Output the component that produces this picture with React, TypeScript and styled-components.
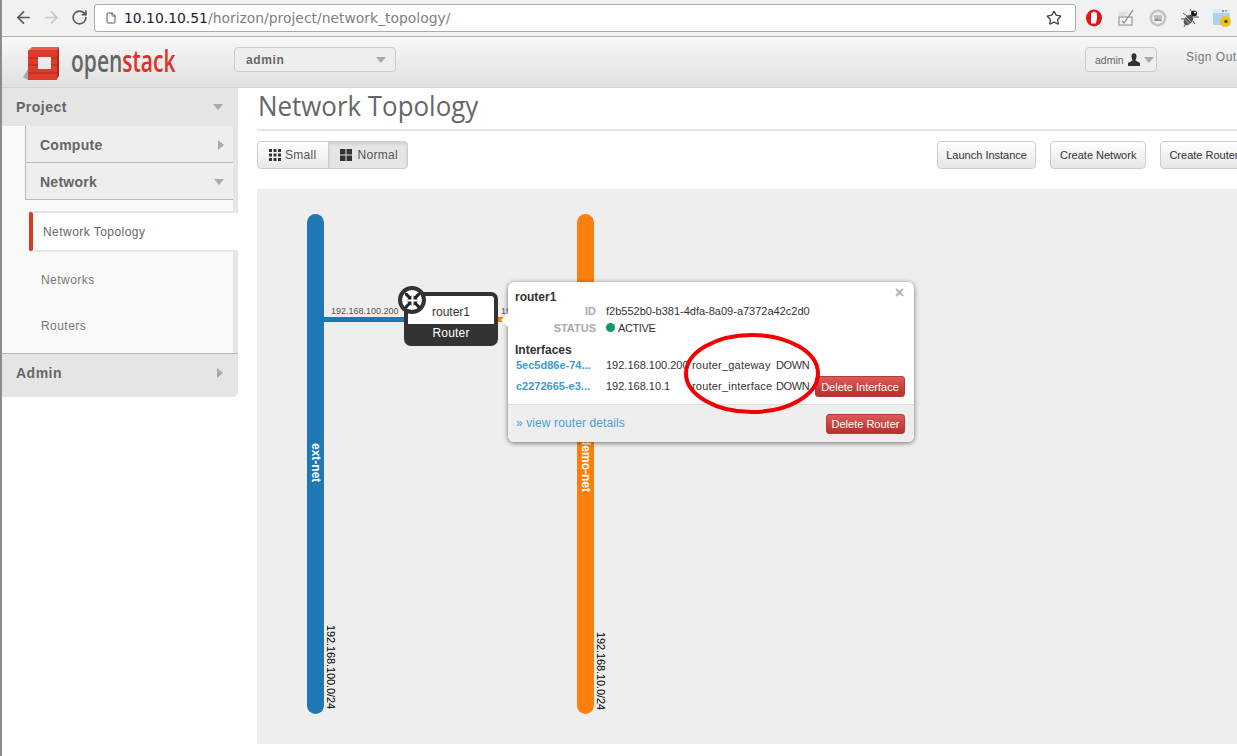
import { ArrowLeft, ArrowRight, File, RotateCw, Star } from "lucide-react";
import styled, { createGlobalStyle } from "styled-components";

const interfaces = [
  { id: "5ec5d86e-74...", ip: "192.168.100.200", type: "router_gateway", status: "DOWN", deletable: false },
  { id: "c2272665-e3...", ip: "192.168.10.1", type: "router_interface", status: "DOWN", deletable: true },
];

const App = () => {
  return (
    <Page>
      <GlobalStyle />
      <BrowserBar>
        <NavIcon><ArrowLeft size={19} strokeWidth={2.2} color="#5a5a5a" /></NavIcon>
        <NavIcon><ArrowRight size={19} strokeWidth={2.2} color="#c8c8c8" /></NavIcon>
        <NavIcon><RotateCw size={17} strokeWidth={2.4} color="#5a5a5a" /></NavIcon>
        <AddressBar>
          <File size={12} color="#555" />
          <Url>
            10.10.10.51<UrlPath>/horizon/project/network_topology/</UrlPath>
          </Url>
          <Star size={16} strokeWidth={2} color="#444" />
        </AddressBar>
        <Extensions>
          <svg width="20" height="20" viewBox="0 0 20 20">
            <ellipse cx="10" cy="10" rx="8" ry="8.500" fill="#e0141c" />
            <path d="M7 15.500V9l.4-4.500 1 .5.800-1.500 1 .5 1-.5.600 1.500 1-.5.200 5-1 6z" fill="#fff" />
          </svg>
          <svg width="20" height="20" viewBox="0 0 20 20">
            <rect x="2" y="2" width="14" height="17" fill="#ececec" />
            <rect x="3" y="9" width="13" height="8" fill="#f6f6f6" stroke="#8a8a8a" />
            <path d="M6 13l2 2 9-13" fill="none" stroke="#8c8c8c" strokeWidth="1.300" />
            <path d="M3 5h8M3 7h6" stroke="#d0d0d0" />
          </svg>
          <svg width="20" height="20" viewBox="0 0 20 20">
            <circle cx="10" cy="10" r="7.200" fill="#f0f0f0" stroke="#c4c4c4" strokeWidth="2.600" />
            <rect x="6" y="7" width="8" height="6" fill="#c0c0c0" />
            <path d="M6 13l3-3 2 2 1-1 2 2z" fill="#8f8f8f" />
          </svg>
          <svg width="20" height="20" viewBox="0 0 20 20">
            <ellipse cx="8.500" cy="12" rx="4" ry="5.800" fill="#555" transform="rotate(40 8.500 12)" />
            <path d="M6 9l5 5M4.500 11l5 5" stroke="#ccc" strokeWidth=".8" />
            <circle cx="14" cy="5.500" r="3" fill="#1c1c1c" />
            <circle cx="15" cy="4.500" r="1" fill="#fff" />
            <path d="M3 5l4 3M1 11l4 0M4 19l2-4M10 1l2 3M19 9l-5 0M15 16l-2-3" stroke="#555" strokeWidth="1" />
          </svg>
          <svg width="20" height="20" viewBox="0 0 20 20">
            <rect x="1" y="1" width="17" height="16" rx="1" fill="#a9d3ee" />
            <rect x="1" y="1" width="17" height="4" fill="#dcedf8" />
            <circle cx="11" cy="3" r="1" fill="#e45" />
            <circle cx="14" cy="3" r="1" fill="#5b5" />
            <circle cx="13.500" cy="13.500" r="5.500" fill="#f2c21a" />
            <circle cx="14" cy="13.500" r="1.800" fill="#5a4300" />
          </svg>
        </Extensions>
      </BrowserBar>

      <Header>
        <Logo>
          <svg width="38" height="36" viewBox="0 0 38 36">
            <path d="M1 31l5-8v11z" fill="#a9a9a9" />
            <path d="M7 4l3-3h27l-2 3z" fill="#ea5b4c" />
            <path d="M35 4l2-3v29l-2 3z" fill="#b5281c" />
            <path fillRule="evenodd" d="M6 4h29v30H6zM16 11v12h13V11z" fill="#df3b2b" />
            <path d="M6 12h10M6 19h10M6 27h29M29 12h6M29 19h6" stroke="#a82a1f" strokeWidth="1" />
          </svg>
          <LogoText>
            open<LogoAccent>stack</LogoAccent>
          </LogoText>
        </Logo>
        <ProjectSelect>
          admin
          <Caret $dir="down" />
        </ProjectSelect>
        <HeaderRight>
          <UserSelect>
            admin
            <svg width="14" height="13" viewBox="0 0 14 13">
              <path d="M4.500 3.500a2.500 3.200 0 0 1 5 0c0 2-1 3-1 4l4.500 2.500V13H1v-3l4.500-2.500c0-1-1-2-1-4z" fill="#333" />
            </svg>
            <Caret $dir="down" />
          </UserSelect>
          <SignOut>Sign Out</SignOut>
        </HeaderRight>
      </Header>

      <Body>
        <Sidebar>
          <SectionHead>
            Project
            <Caret $dir="down" />
          </SectionHead>
          <Panel>
            <SubHead>
              Compute
              <Caret $dir="right" />
            </SubHead>
            <SubHead>
              Network
              <Caret $dir="down" />
            </SubHead>
            <ActiveLink>Network Topology</ActiveLink>
            <NavLink>Networks</NavLink>
            <NavLink>Routers</NavLink>
          </Panel>
          <SectionHead $closing>
            Admin
            <Caret $dir="right" />
          </SectionHead>
        </Sidebar>

        <Main>
          <Title>
            <TitleText>Network Topology</TitleText>
          </Title>
          <Toolbar>
            <ButtonGroup>
              <GroupButton>
                <svg width="12" height="12" viewBox="0 0 12 12" fill="#333">
                  {[0, 4.500, 9].map((x) =>
                    [0, 4.500, 9].map((y) => <rect key={`${x}-${y}`} x={x} y={y} width="3" height="3" />),
                  )}
                </svg>
                Small
              </GroupButton>
              <GroupButton $active>
                <svg width="12" height="12" viewBox="0 0 12 12" fill="#333">
                  <rect width="5.500" height="5.500" />
                  <rect x="6.500" width="5.500" height="5.500" />
                  <rect y="6.500" width="5.500" height="5.500" />
                  <rect x="6.500" y="6.500" width="5.500" height="5.500" />
                </svg>
                Normal
              </GroupButton>
            </ButtonGroup>
            <Actions>
              <ActionButton>Launch Instance</ActionButton>
              <ActionButton>Create Network</ActionButton>
              <ActionButton>Create Router</ActionButton>
            </Actions>
          </Toolbar>

          <Canvas>
            <NetworkBar $left={50} $color="#1f77b4">
              <NetworkName $top={229}>ext-net</NetworkName>
            </NetworkBar>
            <NetworkCidr $left={67} $top={436}>192.168.100.0/24</NetworkCidr>
            <NetworkBar $left={320} $color="#ff7f0e">
              <NetworkName $top={224}>demo-net</NetworkName>
            </NetworkBar>
            <NetworkCidr $left={337} $top={443}>192.168.10.0/24</NetworkCidr>

            <PortLink $left={67} $width={81} $color="#1f77b4" />
            <PortLabel $left={74}>192.168.100.200</PortLabel>
            <PortLink $left={240} $width={12} $color="#ff7f0e" />
            <PortLabel $left={244}>192.168.10.1</PortLabel>

            <RouterNode>
              <RouterName>router1</RouterName>
              <RouterKind>Router</RouterKind>
              <RouterBadge>
                <svg width="17" height="17" viewBox="0 0 16 16" fill="#222">
                  <path d="M1 1l2 0 3 3 1-1v4H3l1-1-3-3zM15 1v2l-3 3 1 1H9V3l1 1 3-3zM1 15v-2l3-3-1-1h4v4l-1-1-3 3zM15 15h-2l-3-3-1 1V9h4l-1 1 3 3z" />
                </svg>
              </RouterBadge>
            </RouterNode>

            <Balloon>
              <Close>×</Close>
              <BalloonBody>
                <BalloonTitle>router1</BalloonTitle>
                <InfoRow>
                  <InfoLabel>ID</InfoLabel>
                  <span>f2b552b0-b381-4dfa-8a09-a7372a42c2d0</span>
                </InfoRow>
                <InfoRow>
                  <InfoLabel>STATUS</InfoLabel>
                  <StatusValue>
                    <StatusDot />
                    ACTIVE
                  </StatusValue>
                </InfoRow>
                <SectionTitle>Interfaces</SectionTitle>
                {interfaces.map((item) => (
                  <InterfaceRow key={item.id}>
                    <InterfaceLink>{item.id}</InterfaceLink>
                    <span>{item.ip}</span>
                    <InterfaceType>{item.type}</InterfaceType>
                    <InterfaceStatus>{item.status}</InterfaceStatus>
                    {item.deletable && <DangerButton $width={90} $height={21}>Delete Interface</DangerButton>}
                  </InterfaceRow>
                ))}
              </BalloonBody>
              <BalloonFooter>
                <DetailsLink>» view router details</DetailsLink>
                <DangerButton $width={79} $height={20}>Delete Router</DangerButton>
              </BalloonFooter>
            </Balloon>

            <Highlight width="140" height="85" viewBox="0 0 140 85">
              <ellipse cx="69" cy="42.500" rx="66" ry="38.500" fill="none" stroke="#f00000" strokeWidth="4" />
            </Highlight>
          </Canvas>
        </Main>
      </Body>
    </Page>
  );
};

const GlobalStyle = createGlobalStyle`
  html, body {
    margin: 0;
    padding: 0;
    background: #fff;
  }
  body {
    font-family: "Liberation Sans", Arial, sans-serif;
    overflow: hidden;
  }
  * {
    box-sizing: border-box;
  }
`;

const Page = styled.div`
  width: 1237px;
  height: 756px;
  overflow: hidden;
  border-left: 2px solid #8c8c8c;
  background: #fff;
`;

const BrowserBar = styled.div`
  height: 37px;
  display: flex;
  align-items: center;
  padding: 0 0 1px 7px;
  background: #f1f1f1;
  border-bottom: 1px solid #adadad;
`;

const NavIcon = styled.span`
  width: 28px;
  display: flex;
  justify-content: center;
`;

const AddressBar = styled.div`
  width: 982px;
  height: 28px;
  margin-left: 1px;
  display: flex;
  align-items: center;
  gap: 7px;
  padding: 0 13px 0 10px;
  background: #fff;
  border: 1px solid #aaa;
  border-radius: 3px;
`;

const Url = styled.span`
  flex: 1;
  font-family: "DejaVu Sans", sans-serif;
  font-size: 13.900px;
  color: #222;
`;

const UrlPath = styled.span`
  color: #808080;
`;

const Extensions = styled.div`
  display: flex;
  gap: 12px;
  margin-left: 8px;
`;

const Header = styled.div`
  height: 51px;
  display: flex;
  align-items: center;
  padding: 0 0 5px 20px;
  background: linear-gradient(#f8f8f8, #e0e0e0);
  border-bottom: 1px solid #d2d2d2;
`;

const Logo = styled.div`
  width: 212px;
  margin-top: 9px;
  display: flex;
  align-items: center;
  gap: 11px;
`;

const LogoText = styled.span`
  display: inline-block;
  margin-top: -6px;
  transform: scaleX(0.7);
  transform-origin: left center;
  font-family: "Open Sans", sans-serif;
  font-size: 30px;
  font-weight: 600;
  line-height: 36px;
  color: #666;
  white-space: nowrap;
`;

const LogoAccent = styled.span`
  color: #dc3228;
`;

const Select = styled.div`
  height: 25px;
  display: flex;
  align-items: center;
  background: #eee;
  border: 1px solid #ccc;
  border-radius: 4px;
  color: #666;
`;

const ProjectSelect = styled(Select)`
  width: 162px;
  justify-content: space-between;
  padding: 0 9px 0 11px;
  font-size: 12px;
  font-weight: bold;
  letter-spacing: 0.6px;
`;

const HeaderRight = styled.div`
  margin-left: auto;
  display: flex;
  align-items: center;
  gap: 29px;
  margin-right: -30px;
`;

const UserSelect = styled(Select)`
  width: 72px;
  gap: 3px;
  padding-left: 9px;
  font-size: 10.500px;
`;

const SignOut = styled.span`
  width: 81px;
  margin-top: -5px;
  color: #777;
  font-size: 12px;
  letter-spacing: 0.5px;
`;

const Caret = styled.i<{ $dir: "down" | "right" }>`
  flex: none;
  width: 0;
  height: 0;
  border-style: solid;
  border-color: transparent;
  ${({ $dir }) =>
    $dir === "down"
      ? "border-width: 6px 5px 0 5px; border-top-color: #aaa;"
      : "border-width: 5.500px 0 5.500px 6px; border-left-color: #aaa;"}
`;

const Body = styled.div`
  display: flex;
  align-items: flex-start;
`;

const Sidebar = styled.nav`
  width: 236px;
  flex: none;
  color: #666;
`;

const SectionHead = styled.div<{ $closing?: boolean }>`
  height: ${({ $closing }) => ($closing ? "44px" : "38px")};
  display: flex;
  align-items: center;
  justify-content: space-between;
  padding: 0 15px 0 14px;
  background: #e5e5e5;
  font-size: 14px;
  font-weight: bold;
  letter-spacing: 0.5px;
  ${({ $closing }) =>
    $closing && "padding-bottom: 5px; border-top: 1px solid #b9b9b9; border-bottom-right-radius: 5px;"}
`;

const Panel = styled.div`
  height: 227px;
  background: #f9f9f9;
  border-right: 5px solid #e5e5e5;
  padding-left: 23px;
`;

const SubHead = styled.div`
  height: 37px;
  display: flex;
  align-items: center;
  justify-content: space-between;
  padding: 2px 9px 0 14px;
  background: #eee;
  border-left: 1px solid #b9b9b9;
  border-bottom: 1px solid #b9b9b9;
  font-size: 14px;
  font-weight: bold;
  letter-spacing: 0.25px;
`;

const ActiveLink = styled.div`
  height: 41px;
  margin: 11px -5px 0 4px;
  display: flex;
  align-items: center;
  padding-left: 10px;
  background: #fff;
  border-left: 4px solid #dc3a22;
  border-top: 2px solid #e5e5e5;
  border-bottom: 2px solid #e5e5e5;
  border-radius: 3px 0 0 3px;
  font-size: 12px;
  letter-spacing: 0.45px;
  color: #666;
`;

const NavLink = styled.div`
  height: 46px;
  display: flex;
  align-items: center;
  padding-left: 16px;
  font-size: 12px;
  letter-spacing: 0.45px;
  color: #777;
  &:nth-child(4) {
    margin-top: 5px;
  }
`;

const Main = styled.main`
  flex: 1;
  min-width: 0;
  padding-left: 19px;
`;

const Title = styled.h1`
  height: 43px;
  margin: 0 0 10px;
  padding: 0 0 0 1px;
  border-bottom: 2px solid #e6e6e6;
  font-family: "Open Sans", sans-serif;
  font-size: 28px;
  font-weight: 400;
  line-height: 34px;
  color: #666;
`;

const TitleText = styled.span`
  display: inline-block;
  transform: scaleX(0.925);
  transform-origin: left center;
  white-space: nowrap;
`;

const Toolbar = styled.div`
  height: 28px;
  display: flex;
  justify-content: space-between;
  margin-right: -11px;
`;

const ButtonGroup = styled.div`
  display: flex;
`;

const GroupButton = styled.button<{ $active?: boolean }>`
  height: 28px;
  display: flex;
  align-items: center;
  gap: ${({ $active }) => ($active ? "6px" : "4px")};
  padding: ${({ $active }) => ($active ? "0 9px 0 11px" : "0 11px")};
  font-family: inherit;
  font-size: 12px;
  letter-spacing: 0.3px;
  color: #555;
  border: 1px solid #ccc;
  background: ${({ $active }) => ($active ? "#e5e5e5" : "linear-gradient(#fff, #e8e8e8)")};
  border-radius: ${({ $active }) => ($active ? "0 4px 4px 0" : "4px 0 0 4px")};
  ${({ $active }) => $active && "margin-left: -1px; box-shadow: inset 0 2px 3px rgba(0, 0, 0, 0.1);"}
`;

const Actions = styled.div`
  display: flex;
  gap: 14px;
`;

const ActionButton = styled.button`
  height: 28px;
  padding: 0 8.500px;
  font-family: inherit;
  font-size: 11px;
  color: #333;
  border: 1px solid #ccc;
  border-radius: 4px;
  background: linear-gradient(#fff, #e6e6e6);
  white-space: nowrap;
`;

const Canvas = styled.div`
  position: relative;
  height: 555px;
  margin-top: 20px;
  background: #eee;
`;

const NetworkBar = styled.div<{ $left: number; $color: string }>`
  position: absolute;
  left: ${({ $left }) => $left}px;
  top: 25px;
  width: 17px;
  height: 500px;
  border-radius: 9px;
  background: ${({ $color }) => $color};
`;

const NetworkName = styled.span<{ $top: number }>`
  position: absolute;
  top: ${({ $top }) => $top}px;
  left: 0;
  width: 17px;
  line-height: 17px;
  writing-mode: vertical-rl;
  color: #fff;
  font-size: 12px;
  font-weight: bold;
`;

const NetworkCidr = styled.span<{ $left: number; $top: number }>`
  position: absolute;
  left: ${({ $left }) => $left}px;
  top: ${({ $top }) => $top}px;
  writing-mode: vertical-rl;
  font-size: 11px;
  letter-spacing: -0.1px;
  line-height: 13px;
  color: #000;
`;

const PortLink = styled.div<{ $left: number; $width: number; $color: string }>`
  position: absolute;
  left: ${({ $left }) => $left}px;
  top: 128px;
  width: ${({ $width }) => $width}px;
  height: 5px;
  background: ${({ $color }) => $color};
`;

const PortLabel = styled.span<{ $left: number }>`
  position: absolute;
  left: ${({ $left }) => $left}px;
  top: 117px;
  font-size: 9px;
  line-height: 11px;
  color: #555;
  white-space: nowrap;
`;

const RouterNode = styled.div`
  position: absolute;
  left: 147px;
  top: 103px;
  width: 94px;
  height: 54px;
  display: flex;
  flex-direction: column;
  background: #333;
  border: 4px solid #333;
  border-radius: 7px;
`;

const RouterName = styled.div`
  height: 30px;
  display: flex;
  align-items: center;
  justify-content: center;
  padding-top: 4px;
  background: #fff;
  border-radius: 3px 3px 0 0;
  font-size: 12px;
  color: #333;
`;

const RouterKind = styled.div`
  height: 20px;
  display: flex;
  align-items: center;
  justify-content: center;
  font-size: 12px;
  color: #fff;
  letter-spacing: 0.2px;
`;

const RouterBadge = styled.div`
  position: absolute;
  left: -10px;
  top: -10px;
  width: 28px;
  height: 28px;
  display: flex;
  align-items: center;
  justify-content: center;
  background: #fff;
  border: 4px solid #333;
  border-radius: 50%;
`;

const Balloon = styled.div`
  position: absolute;
  left: 251px;
  top: 93px;
  width: 406px;
  height: 160px;
  display: flex;
  flex-direction: column;
  background: #fff;
  border-radius: 6px;
  box-shadow: 0 1px 5px rgba(0, 0, 0, 0.55);
  font-size: 11px;
  color: #333;
  &::before {
    content: "";
    position: absolute;
    left: -7px;
    top: 31px;
    border-style: solid;
    border-width: 7px 7px 7px 0;
    border-color: transparent #fff transparent transparent;
  }
`;

const Close = styled.span`
  position: absolute;
  right: 10px;
  top: 3px;
  font-size: 16px;
  line-height: 16px;
  font-weight: bold;
  color: #b0b0b0;
`;

const BalloonBody = styled.div`
  flex: 1;
  padding: 8px 8px 0 7px;
  border-bottom: 1px solid #ddd;
`;

const BalloonTitle = styled.div`
  height: 14px;
  line-height: 14px;
  font-size: 12px;
  font-weight: bold;
  margin-bottom: -2px;
`;

const InfoRow = styled.div`
  height: 17px;
  display: grid;
  grid-template-columns: 81px auto;
  column-gap: 10px;
  align-items: center;
`;

const InfoLabel = styled.span`
  text-align: right;
  font-size: 11px;
  font-weight: bold;
  color: #aaa;
`;

const StatusValue = styled.span`
  display: flex;
  align-items: center;
  gap: 3px;
  letter-spacing: -0.4px;
`;

const StatusDot = styled.i`
  width: 9px;
  height: 9px;
  border-radius: 50%;
  background: #0f9a64;
`;

const SectionTitle = styled.div`
  margin: 7px 0 -2px;
  height: 14px;
  line-height: 14px;
  font-size: 12px;
  font-weight: bold;
`;

const InterfaceRow = styled.div`
  height: 21px;
  margin-left: 1px;
  display: grid;
  grid-template-columns: 90px 86px 84px 39px auto;
  align-items: center;
  white-space: nowrap;
  & > span {
    margin-top: -2px;
  }
`;

const InterfaceLink = styled.span`
  font-weight: bold;
  color: #3b9ad6;
`;

const InterfaceType = styled.span`
  letter-spacing: 0.2px;
`;

const InterfaceStatus = styled.span`
  letter-spacing: -0.4px;
`;

const DangerButton = styled.button<{ $width: number; $height: number }>`
  width: ${({ $width }) => $width}px;
  height: ${({ $height }) => $height}px;
  padding: 0;
  font-family: inherit;
  font-size: 11px;
  color: #fff;
  border: 1px solid #b33a36;
  border-radius: 3px;
  background: linear-gradient(#dc5b56, #b82e2a);
  white-space: nowrap;
`;

const BalloonFooter = styled.div`
  height: 37px;
  display: flex;
  align-items: center;
  justify-content: space-between;
  padding: 0 9px 0 8px;
  background: #eee;
  border-radius: 0 0 6px 6px;
`;

const DetailsLink = styled.span`
  margin-top: -1px;
  font-size: 12px;
  letter-spacing: 0.1px;
  color: #4a9fd8;
`;

const Highlight = styled.svg`
  position: absolute;
  left: 426px;
  top: 142px;
`;

export default App;
